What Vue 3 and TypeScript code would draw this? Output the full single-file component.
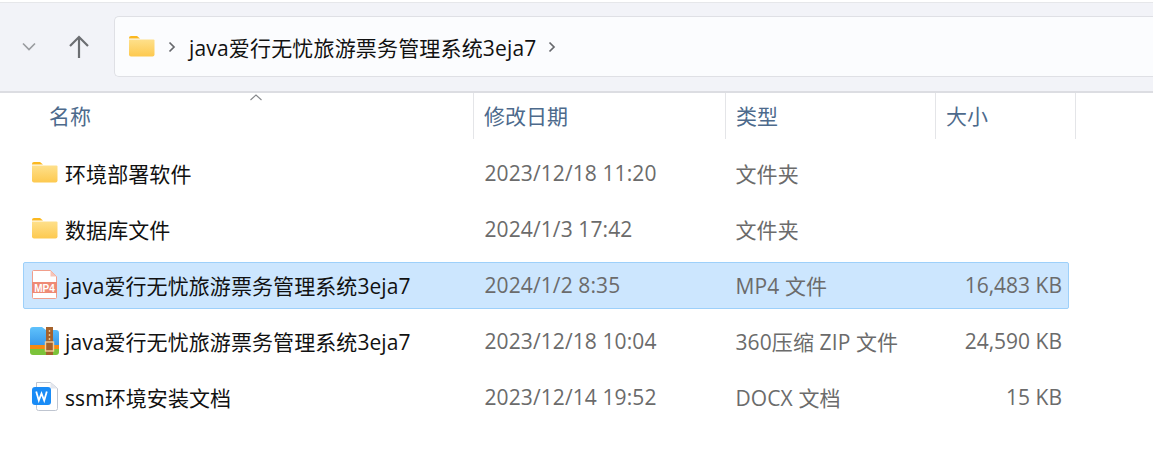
<template>
  <div class="explorer">
    <div class="toolbar">
      <div class="nav">
        <svg class="nav-down" width="16" height="10" viewBox="0 0 16 10"><path d="M2 1.500 8 7.500 14 1.500" fill="none" stroke="#9a9ca0" stroke-width="1.700" /></svg>
        <svg class="nav-up" width="22" height="24" viewBox="0 0 22 24"><path d="M11 23V2M2 11l9-9 9 9" fill="none" stroke="#6c6e72" stroke-width="2.200" /></svg>
      </div>
      <div class="address">
        <svg class="folder-icon" width="26" height="21" viewBox="0 0 26 21">
          <path d="M0 2a2 2 0 0 1 2-2h6l3 2.500H0z" fill="#fbb81f" />
          <path d="M0 3.500h24.500a1 1 0 0 1 1 1V18.500a2 2 0 0 1-2 2H2a2 2 0 0 1-2-2z" fill="url(#addrFold)" />
          <defs><linearGradient id="addrFold" x1="0" y1="0" x2="0" y2="1"><stop offset="0" stop-color="#fee08b" /><stop offset="1" stop-color="#fdc94f" /></linearGradient></defs>
        </svg>
        <svg class="crumb first" width="8" height="12" viewBox="0 0 8 12"><path d="M1.500 1.500 6 6l-4.500 4.500" fill="none" stroke="#66686c" stroke-width="1.700" /></svg>
        <span class="crumb-text">java爱行无忧旅游票务管理系统3eja7</span>
        <svg class="crumb last" width="8" height="12" viewBox="0 0 8 12"><path d="M1.500 1.500 6 6l-4.500 4.500" fill="none" stroke="#66686c" stroke-width="1.700" /></svg>
      </div>
    </div>

    <div class="header">
      <div v-for="col in columns" :key="col" class="head-cell">{{ col }}</div>
      <svg class="sort-mark" width="14" height="7" viewBox="0 0 14 7"><path d="M1.500 6 7 1l5.500 5" fill="none" stroke="#85878b" stroke-width="1.100" /></svg>
    </div>

    <div class="rows">
      <div v-for="file in files" :key="file.date" class="row" :class="{ selected: file.selected }">
        <div class="name">
          <span class="icon">
            <svg v-if="file.kind === 'folder'" width="26" height="21" viewBox="0 0 26 21">
              <path d="M0 2a2 2 0 0 1 2-2h6l3 2.500H0z" fill="#fbb81f" />
              <path d="M0 3.500h24.500a1 1 0 0 1 1 1V18.500a2 2 0 0 1-2 2H2a2 2 0 0 1-2-2z" fill="url(#rowFold)" />
              <defs><linearGradient id="rowFold" x1="0" y1="0" x2="0" y2="1"><stop offset="0" stop-color="#fee08b" /><stop offset="1" stop-color="#fdc94f" /></linearGradient></defs>
            </svg>
            <svg v-else-if="file.kind === 'mp4'" width="26" height="29" viewBox="0 0 26 29">
              <path d="M1.500.5H18.500l6 6V27.500a1 1 0 0 1-1 1H1.500a1 1 0 0 1-1-1V1.500a1 1 0 0 1 1-1z" fill="#fff" stroke="#f19e8b" />
              <path d="M18.500.5v6h6z" fill="#f6c4b8" />
              <rect x="0" y="12" width="25" height="11" fill="#ee8a75" />
              <text x="12.500" y="21.500" text-anchor="middle" class="mp4-label">MP4</text>
            </svg>
            <svg v-else-if="file.kind === 'zip'" width="29" height="28" viewBox="0 0 29 28">
              <defs><linearGradient id="zipBlue" x1="0" y1="0" x2="0" y2="1"><stop offset="0" stop-color="#5fc2fc" /><stop offset="1" stop-color="#3a9aea" /></linearGradient></defs>
              <path d="M0 3a3 3 0 0 1 3-3h9l4 3h10a3 3 0 0 1 3 3v12H0z" fill="url(#zipBlue)" />
              <path d="M0 18h29v4H0z" fill="#f78a10" />
              <path d="M0 22h29v3a3 3 0 0 1-3 3H3a3 3 0 0 1-3-3z" fill="#7cc33a" />
              <rect x="16" y="0" width="7" height="28" fill="#a5622b" />
              <path d="M19.500 3v2M19.500 7v2M19.500 11v2" stroke="#e9c48f" stroke-width="1.400" />
              <rect x="15.500" y="15" width="8" height="9" fill="none" stroke="#f2cf9b" stroke-width="1.400" />
            </svg>
            <svg v-else width="26" height="29" viewBox="0 0 26 29">
              <path d="M4.500.5h14l7 6v20a2 2 0 0 1-2 2h-17a2 2 0 0 1-2-2z" fill="#fff" stroke="#bfc5d0" />
              <path d="M18.500.5v6h7z" fill="#e4e7ee" />
              <rect x="0" y="5" width="19" height="18" rx="3" fill="#1a8cf6" />
              <path d="M4.200 9.500 6.800 18.500 9.500 11.500 12.200 18.500 14.800 9.500" fill="none" stroke="#fff" stroke-width="1.800" />
            </svg>
          </span>
          <span class="name-text">{{ file.name }}</span>
        </div>
        <div class="cell">{{ file.date }}</div>
        <div class="cell">{{ file.type }}</div>
        <div class="cell size">{{ file.size }}</div>
      </div>
    </div>
  </div>
</template>

<script setup lang="ts">
interface FileRow {
  name: string;
  date: string;
  type: string;
  size: string;
  kind: 'folder' | 'mp4' | 'zip' | 'docx';
  selected?: boolean;
}

const columns = ['名称', '修改日期', '类型', '大小'];

const files: FileRow[] = [
  { name: '环境部署软件', date: '2023/12/18 11:20', type: '文件夹', size: '', kind: 'folder' },
  { name: '数据库文件', date: '2024/1/3 17:42', type: '文件夹', size: '', kind: 'folder' },
  { name: 'java爱行无忧旅游票务管理系统3eja7', date: '2024/1/2 8:35', type: 'MP4 文件', size: '16,483 KB', kind: 'mp4', selected: true },
  { name: 'java爱行无忧旅游票务管理系统3eja7', date: '2023/12/18 10:04', type: '360压缩 ZIP 文件', size: '24,590 KB', kind: 'zip' },
  { name: 'ssm环境安装文档', date: '2023/12/14 19:52', type: 'DOCX 文档', size: '15 KB', kind: 'docx' },
];
</script>

<style>
html,
body {
  margin: 0;
  background: #fff;
}
</style>

<style scoped>
.explorer {
  width: 1153px;
  height: 470px;
  overflow: hidden;
  background: #fff;
  font-family: "Open Sans", "Noto Sans CJK SC", sans-serif;
  font-size: 21px;
}

.toolbar {
  display: flex;
  height: 91px;
  margin-top: 2px;
  border-top: 1px solid #e6e7ea;
  border-bottom: 2px solid #dcdde2;
  background: #f2f3f8;
  box-sizing: border-box;
}

.nav {
  display: flex;
  align-items: center;
  width: 114px;
  height: 88px;
  box-sizing: border-box;
}

.nav-down {
  margin-left: 21px;
}

.nav-up {
  margin-left: 31px;
}

.address {
  display: flex;
  align-items: center;
  flex: 1;
  height: 61px;
  margin-top: 13px;
  border: 1px solid #dfe0e5;
  border-right: none;
  border-radius: 5px 0 0 5px;
  background: #fbfcfe;
  box-sizing: border-box;
  padding-left: 14px;
}

.crumb.first {
  margin-left: 13px;
}

.crumb-text {
  margin-left: 13px;
  color: #111;
  white-space: nowrap;
  letter-spacing: 0.17px;
}

.crumb.last {
  margin-left: 12px;
}

.header {
  position: relative;
  display: grid;
  grid-template-columns: 474px 252px 210px 140px;
  height: 46px;
  color: #4d6a8c;
}

.head-cell {
  display: flex;
  align-items: center;
  padding: 0 0 2px 10px;
  border-right: 1px solid #e4e5e8;
  box-sizing: border-box;
}

.head-cell:first-child {
  padding-left: 49px;
}

.sort-mark {
  position: absolute;
  left: 249px;
  top: 1px;
}

.rows {
  display: flex;
  flex-direction: column;
  gap: 9px;
  margin: 11px 0 0 23px;
  width: 1046px;
}

.row {
  display: grid;
  grid-template-columns: 451px 251px 210px 133px;
  align-items: center;
  height: 47px;
  padding-bottom: 2px;
  border: 1px solid transparent;
  border-radius: 2px;
  box-sizing: border-box;
  color: #6b6b6b;
}

.row.selected {
  border-color: #9dd0fa;
  background: #cce6fe;
}

.name {
  display: flex;
  align-items: center;
  color: #111;
}

.icon {
  display: flex;
  align-items: center;
  justify-content: center;
  width: 41px;
  flex: none;
}

.name-text {
  white-space: nowrap;
  letter-spacing: 0.08px;
}

.cell {
  padding-left: 9.5px;
  white-space: nowrap;
  letter-spacing: 0.1px;
}

.size {
  padding-left: 0;
  padding-right: 7px;
  text-align: right;
  letter-spacing: 0;
}

.mp4-label {
  fill: #fff;
  font-family: "Liberation Sans", sans-serif;
  font-size: 10px;
  font-weight: 700;
}
</style>
